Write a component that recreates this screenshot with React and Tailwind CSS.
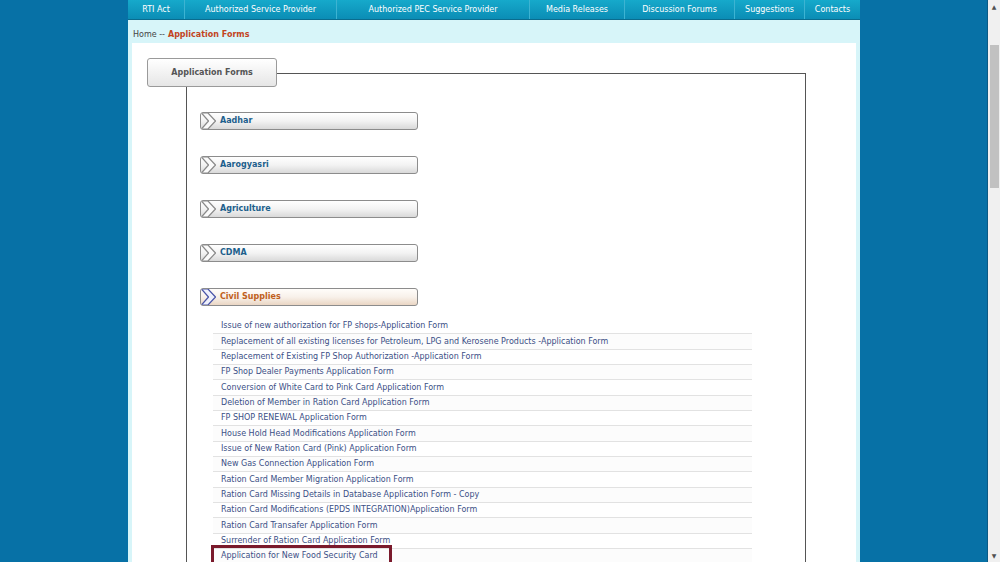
import React from 'react';

const navItems = [
  { label: 'RTI Act', w: 'w-[57px]' },
  { label: 'Authorized Service Provider', w: 'w-[152px]' },
  { label: 'Authorized PEC Service Provider', w: 'w-[193px]' },
  { label: 'Media Releases', w: 'w-[95px]' },
  { label: 'Discussion Forums', w: 'w-[110px]' },
  { label: 'Suggestions', w: 'w-[70px]' },
  { label: 'Contacts', w: 'w-[55px]' },
];

const sections = ['Aadhar', 'Aarogyasri', 'Agriculture', 'CDMA'];

const civilForms = [
  'Issue of new authorization for FP shops-Application Form',
  'Replacement of all existing licenses for Petroleum, LPG and Kerosene Products -Application Form',
  'Replacement of Existing FP Shop Authorization -Application Form',
  'FP Shop Dealer Payments Application Form',
  'Conversion of White Card to Pink Card Application Form',
  'Deletion of Member in Ration Card Application Form',
  'FP SHOP RENEWAL Application Form',
  'House Hold Head Modifications Application Form',
  'Issue of New Ration Card (Pink) Application Form',
  'New Gas Connection Application Form',
  'Ration Card Member Migration Application Form',
  'Ration Card Missing Details in Database Application Form - Copy',
  'Ration Card Modifications (EPDS INTEGRATION)Application Form',
  'Ration Card Transafer Application Form',
  'Surrender of Ration Card Application Form',
  'Application for New Food Security Card',
];

function Chevron({ active }) {
  return (
    <svg width="17" height="18" viewBox="0 0 17 18" className="shrink-0">
      <path
        d="M0.5 1 L7 1 L14.5 9 L7 17 L0.5 17 L7.5 9 Z"
        fill={active ? '#eef0fb' : '#fafafa'}
        stroke={active ? '#4a55a8' : '#8a8a8a'}
        strokeWidth="1.2"
        strokeLinejoin="round"
      />
    </svg>
  );
}

function SectionHeader({ label, active }) {
  return (
    <div
      className={`flex h-[18px] w-[218px] shrink-0 items-center overflow-hidden rounded-[3px] border ${
        active
          ? 'border-[#8c8c8c] bg-gradient-to-b from-[#fffdfa] via-[#f8f1ea] to-[#ead6c4]'
          : 'border-[#8c8c8c] bg-gradient-to-b from-[#ffffff] via-[#f3f3f3] to-[#d9d9d9]'
      }`}
    >
      <Chevron active={active} />
      <span
        className={`ml-[2px] text-[8px] font-bold ${
          active ? 'text-[#c0601c]' : 'text-[#1d5f8c]'
        }`}
      >
        {label}
      </span>
    </div>
  );
}

export default function App() {
  return (
    <div className="flex h-[562px] w-[1000px] overflow-hidden bg-[#0771a6] font-['DejaVu_Sans',sans-serif]">
      <div className="flex-1">
        <div className="ml-[128px] flex h-[562px] w-[732px] flex-col overflow-hidden bg-[#d7f5f9]">
          {/* top nav */}
          <div className="flex h-[20px] shrink-0 border-b border-[#0a6c8e] bg-gradient-to-b from-[#16a9cb] to-[#0b8db5]">
            {navItems.map((n, i) => (
              <div
                key={n.label}
                className={`flex h-full items-center justify-center pt-[1px] text-[8px] text-white ${n.w} ${
                  i < navItems.length - 1 ? 'border-r border-[#3db3d2]' : ''
                }`}
              >
                {n.label}
              </div>
            ))}
          </div>

          {/* breadcrumb */}
          <div className="flex h-[23px] shrink-0 items-center pl-[5px] pt-[6px] text-[8px]">
            <span className="text-[#444]">Home -- </span>
            <span className="ml-[3px] font-bold text-[#c2441e]">Application Forms</span>
          </div>

          {/* content panel */}
          <div className="mx-[4px] shrink-0 grow bg-white pt-[30px]">
            <div className="relative ml-[54px] w-[620px] border-l border-r border-t border-[#555] pb-[40px] pl-[13px] pt-[38px]">
              <div className="absolute left-[-40px] top-[-16px] flex h-[29px] w-[130px] items-center justify-center rounded-[3px] border border-[#9a9a9a] bg-gradient-to-b from-[#ffffff] to-[#e6e6e6] text-[8px] font-bold text-[#555]">
                Application Forms
              </div>

              <div className="flex flex-col gap-[26px]">
                {sections.map((s) => (
                  <SectionHeader key={s} label={s} />
                ))}
                <SectionHeader label="Civil Supplies" active />
              </div>

              <div className="ml-[13px] mt-[13px] w-[539px]">
                {civilForms.map((f, i) => (
                  <div
                    key={f}
                    className={`relative flex h-[15.35px] items-center border-b border-[#e2e2e2] pl-[8px] text-[8px] text-[#3b4f86] ${
                      i % 2 === 1 ? 'bg-[#fcfcfc]' : 'bg-white'
                    }`}
                  >
                    {f}
                    {i === civilForms.length - 1 && (
                      <div className="absolute left-[-2px] top-[-4px] h-[24px] w-[181px] border-[3px] border-[#7a1a2c]" />
                    )}
                  </div>
                ))}
              </div>
            </div>
          </div>
        </div>
      </div>

      {/* scrollbar */}
      <div className="flex w-[13px] flex-col border-l border-[#0a5a85] bg-[#f0f0f0]">
        <div className="flex h-[13px] items-center justify-center text-[6px] leading-none text-[#505050]">▲</div>
        <div className="mx-auto mt-[32px] h-[143px] w-[9px] bg-[#c1c1c1]" />
        <div className="flex-1" />
        <div className="flex h-[13px] items-center justify-center text-[6px] leading-none text-[#505050]">▼</div>
      </div>
    </div>
  );
}
